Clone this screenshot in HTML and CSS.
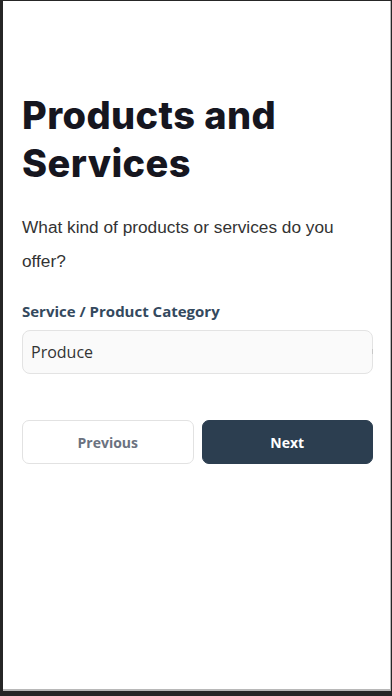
FILE: index.html
```html
<!DOCTYPE html>
<html lang="en">
<head>
<meta charset="utf-8">
<meta name="viewport" content="width=device-width, initial-scale=1">
<title>Products and Services</title>
<link rel="stylesheet" href="styles.css">
</head>
<body>
<div class="screen">
  <main class="content">
    <h1 class="title">Products and Services</h1>
    <p class="lead">What kind of products or services do you offer?</p>
    <label class="field-label" for="category">Service / Product Category</label>
    <div class="input-box">
      <input class="input" id="category" type="text" value="Produce">
      <span class="input-mark"></span>
    </div>
    <div class="actions">
      <button class="btn btn-secondary" type="button">Previous</button>
      <button class="btn btn-primary" type="button">Next</button>
    </div>
  </main>
</div>
</body>
</html>
```
FILE: styles.css
```css
* { box-sizing: border-box; }

html, body {
  margin: 0;
  padding: 0;
  height: 100%;
}

body {
  background: #262626;
  overflow: hidden;
}

.screen {
  margin: 1px 1px 5px 3px;
  height: 690px;
  background: #ffffff;
  border-right: 1px solid #b8b8b8;
  border-bottom: 2px solid #b8b8b8;
}

.content {
  padding: 90px 17px 0 19px;
  display: flex;
  flex-direction: column;
}

.title {
  margin: 0;
  font-family: "Inter", "Liberation Sans", sans-serif;
  font-weight: 800;
  font-size: 38px;
  line-height: 48px;
  letter-spacing: 0.4px;
  color: #16161f;
}

.lead {
  margin: 23px 0 0;
  font-family: "Liberation Sans", Arial, sans-serif;
  font-size: 17.25px;
  line-height: 34px;
  color: #333333;
}

.field-label {
  margin-top: 23px;
  font-family: "Open Sans", "Liberation Sans", sans-serif;
  font-weight: 700;
  font-size: 15px;
  line-height: 20px;
  color: #34495e;
}

.input-box {
  position: relative;
  margin-top: 9px;
}

.input {
  display: block;
  width: 100%;
  height: 44px;
  margin: 0;
  padding: 0 8px;
  border: 1px solid #e3e3e3;
  border-radius: 8px;
  background: #fafafa;
  font-family: "Open Sans", "Liberation Sans", sans-serif;
  font-size: 16px;
  color: #333333;
  outline: none;
}

.input-mark {
  position: absolute;
  right: 0;
  top: 19px;
  width: 1px;
  height: 5px;
  background: #c8c8c8;
}

.actions {
  margin-top: 46px;
  display: grid;
  grid-template-columns: 1fr 1fr;
  gap: 8px;
}

.btn {
  height: 44px;
  border-radius: 7px;
  font-family: "Open Sans", "Liberation Sans", sans-serif;
  font-weight: 700;
  font-size: 14px;
  cursor: pointer;
}

.btn-secondary {
  background: #ffffff;
  border: 1px solid #e2e2e2;
  color: #6b7280;
}

.btn-primary {
  background: #2c3e50;
  border: 1px solid #2c3e50;
  color: #ffffff;
}
```
